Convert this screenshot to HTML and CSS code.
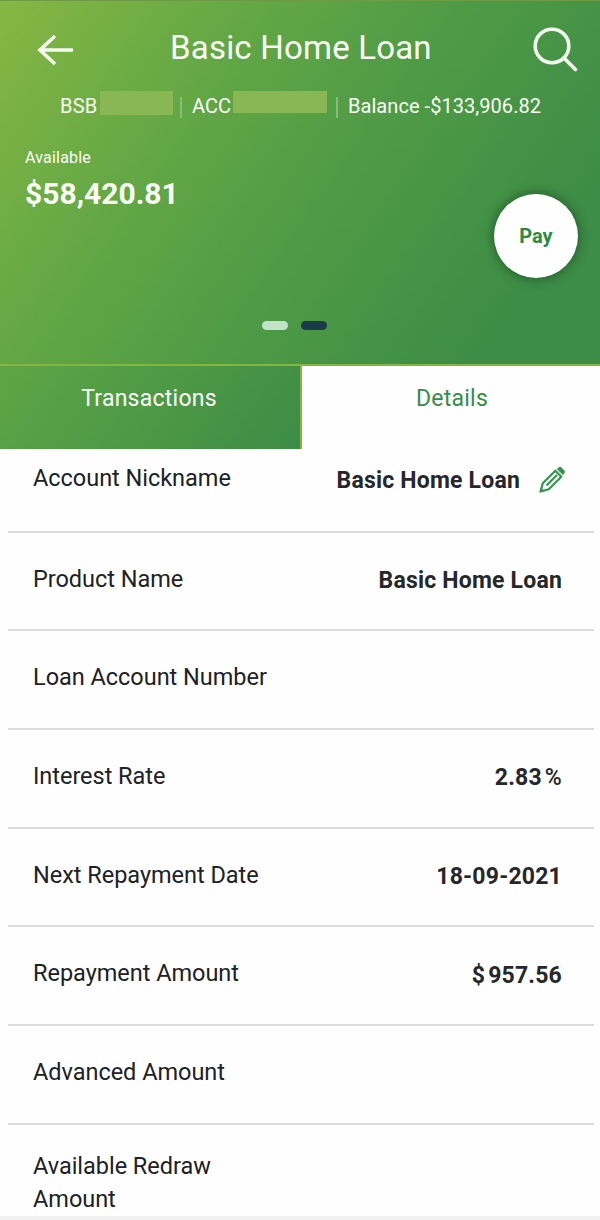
FILE: index.html
```html
<!DOCTYPE html>
<html lang="en">
<head>
<meta charset="utf-8">
<title>Basic Home Loan</title>
<link rel="stylesheet" href="styles.css">
</head>
<body>
<div class="screen">
  <header class="hero">
    <div class="topbar">
      <svg class="back" width="40" height="36" viewBox="0 0 40 36"><path d="M37 18H4M19 4L4 18L19 32" /></svg>
      <h1 class="title">Basic Home Loan</h1>
      <svg class="search" width="48" height="48" viewBox="0 0 48 48"><circle cx="20" cy="20" r="16.8" /><path d="M32 32L43.500 43.500" /></svg>
    </div>
    <div class="account">
      <span class="bsb">BSB</span><span class="mask mask-bsb"></span><span class="bar"></span>
      <span class="acc">ACC</span><span class="mask mask-acc"></span><span class="bar"></span>
      <span class="balance">Balance -$133,906.82</span>
    </div>
    <div class="summary">
      <div class="available">
        <div class="available-label">Available</div>
        <div class="available-amount">$58,420.81</div>
      </div>
      <button class="pay">Pay</button>
    </div>
    <div class="pager"><span class="dot"></span><span class="dot dot-active"></span></div>
  </header>
  <nav class="tabs">
    <div class="tab">Transactions</div>
    <div class="tab tab-active">Details</div>
  </nav>
  <main class="details">
    <div class="row row-first"><span class="label">Account Nickname</span><span class="value">Basic Home Loan</span>
      <svg class="pencil" width="28" height="28" viewBox="0 0 28 28">
        <path class="pencil-body" d="M2.500 25.500L4.800 17.200L17.300 4.700L23.300 10.700L10.800 23.200Z" />
        <path class="pencil-inner" d="M8.500 19.500L19 9" />
        <path class="pencil-cap" d="M18.800 3L20.800 1.200Q22.200 .4 23.500 1.500L26.400 4.400Q27.500 5.800 26.600 7.100L24.900 9ZM1.500 26.500L3 21.500L6.500 25Z" />
      </svg>
    </div>
    <div class="row"><span class="label">Product Name</span><span class="value">Basic Home Loan</span></div>
    <div class="row"><span class="label">Loan Account Number</span></div>
    <div class="row"><span class="label">Interest Rate</span><span class="value">2.83<span class="percent">%</span></span></div>
    <div class="row"><span class="label">Next Repayment Date</span><span class="value">18-09-2021</span></div>
    <div class="row"><span class="label">Repayment Amount</span><span class="value value-low"><span class="dollar">$</span>957.56</span></div>
    <div class="row"><span class="label">Advanced Amount</span></div>
    <div class="row row-last"><span class="label">Available Redraw<br>Amount</span></div>
  </main>
  <div class="footer"></div>
</div>
</body>
</html>
```
FILE: styles.css
```css
* { box-sizing: border-box; }
body { margin: 0; background: #fefefe; font-family: Roboto, "Liberation Sans", sans-serif; }
.screen { width: 600px; height: 1220px; display: flex; flex-direction: column; overflow: hidden; }
.hero { height: 364px; flex: none; display: flex; flex-direction: column; border-top: 1px solid #6e9a45; background: linear-gradient(125deg, #86b742 0%, #66a945 27%, #4f9b45 54%, #3d8c47 86%); color: #fafff5; }
.topbar { height: 88px; display: flex; align-items: flex-start; padding: 25px 19px 0 36px; }
.back { margin-top: 6px; fill: none; stroke: #f6fff0; stroke-width: 3.6; flex: none; }
.title { margin: 0 0 0 94px; width: 362px; font-size: 33px; font-weight: 400; line-height: 43px; letter-spacing: .2px; white-space: nowrap; }
.search { fill: none; stroke: #f2fdee; stroke-width: 3.6; stroke-linecap: round; flex: none; }
.account { height: 54px; display: flex; align-items: flex-start; padding: 2px 0 0 60px; font-size: 20px; line-height: 30px; white-space: nowrap; }
.bsb { width: 40px; letter-spacing: .2px; }
.acc { width: 41px; }
.mask { background: #8ab756; }
.mask-bsb { width: 73px; height: 24px; margin-right: 7px; }
.mask-acc { width: 94px; height: 22px; margin-right: 9px; }
.bar { width: 2px; height: 21px; margin: 6px 10px 0 0; background: #87bc7c; }
.balance { letter-spacing: .05px; }
.summary { height: 170px; display: flex; justify-content: space-between; padding-left: 25px; padding-right: 22px; }
.available-label { margin-top: 4px; font-size: 16px; line-height: 21px; letter-spacing: .2px; }
.available-amount { margin-top: 8px; font-size: 30px; line-height: 36px; font-weight: 700; }
.pay { width: 84px; height: 84px; margin-top: 51px; padding: 0; border: 0; border-radius: 50%; background: #fefefe; box-shadow: 0 0 10px 2px rgba(20, 70, 25, .55); color: #2d8a43; font: 700 20px/84px Roboto, sans-serif; }
.pager { display: flex; gap: 13px; padding: 8px 0 0 262px; }
.dot { width: 26px; height: 9px; border-radius: 5px; background: #c3e2ca; }
.dot-active { background: #1b3a4a; }
.tabs { height: 85px; flex: none; display: flex; border-top: 2px solid #83b53f; text-align: center; font-size: 23px; line-height: 28px; letter-spacing: .25px; }
.tab { width: 302px; padding: 19px 2px 0 0; border-right: 2px solid #83b53f; background: linear-gradient(125deg, #5fa545 0%, #4d9945 50%, #3d8c47 100%); color: #fafff5; }
.tab-active { width: 298px; padding: 19px 0 0 2px; border: 0; background: #fefefe; color: #358e49; }
.details { flex: 1; display: grid; grid-template-rows: 83.500px repeat(6, 98.700px) 1fr; color: #202124; }
.row { display: flex; justify-content: space-between; align-items: flex-start; margin: 0 6px 0 8px; padding: 32px 32px 0 25px; border-bottom: 2px solid #dcdcdc; font-size: 23.500px; line-height: 28px; letter-spacing: -.03px; }
.row-first { padding-top: 15px; padding-right: 28px; }
.value { margin-top: 2px; font-size: 23px; font-weight: 700; letter-spacing: .2px; color: #26272a; }
.value-low { margin-top: 3px; }
.row-first .value { margin-left: auto; margin-right: 18px; margin-top: 3px; }
.percent { margin-left: 3px; font-weight: 500; }
.dollar { margin-right: 3px; }
.pencil { margin-top: 2px; }
.pencil-body, .pencil-inner { fill: none; stroke: #35944f; stroke-width: 2.2; stroke-linejoin: round; }
.pencil-cap { fill: #35944f; }
.row-last { border: 0; padding-top: 25px; line-height: 33.300px; }
.footer { height: 5px; flex: none; background: #f0f0f0; }
```
